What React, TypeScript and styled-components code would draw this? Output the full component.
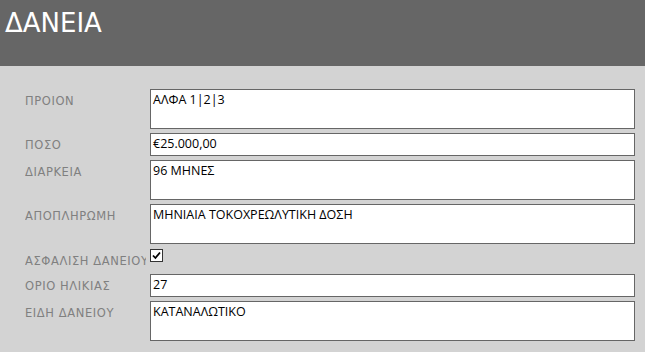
import { Fragment } from 'react'
import styled, { createGlobalStyle } from 'styled-components'

const GlobalStyle = createGlobalStyle`
  html, body {
    margin: 0;
    padding: 0;
    background: #d3d3d3;
  }
`

const Page = styled.div`
  width: 645px;
  height: 352px;
  background: #d3d3d3;
  overflow: hidden;
`

const Header = styled.header`
  height: 66px;
  background: #666666;
  box-sizing: border-box;
  padding: 8px 0 0 5px;
`

const Title = styled.h1`
  margin: 0;
  color: #ffffff;
  font-family: "DejaVu Sans", sans-serif;
  font-weight: normal;
  font-size: 26px;
  line-height: 30px;
`

const Form = styled.div`
  display: grid;
  grid-template-columns: 125px 485px;
  row-gap: 4px;
  padding: 23px 0 0 25px;
`

const Label = styled.div<{ $top?: number }>`
  width: 121px;
  color: #808080;
  font-family: "DejaVu Sans", sans-serif;
  font-size: 11.5px;
  letter-spacing: 0.6px;
  line-height: 14px;
  white-space: nowrap;
  overflow: hidden;
  padding-top: ${props => props.$top ?? 5}px;
`

const Field = styled.div<{ $tall?: boolean }>`
  box-sizing: border-box;
  height: ${props => (props.$tall ? 40 : 23)}px;
  background: #ffffff;
  border: 1px solid #666666;
  padding: 1px 2px;
  color: #000;
  font-family: "Open Sans", "Noto Sans", sans-serif;
  font-size: 12.5px;
  line-height: 17px;
`

const CheckCell = styled.div`
  height: 22px;
  padding-top: 1px;
  box-sizing: border-box;
`

const CheckBox = styled.div`
  width: 13px;
  height: 13px;
  box-sizing: border-box;
  border: 1px solid #333;
  background: #fff;
  display: flex;
  align-items: center;
  justify-content: center;
`

const rows = [
  { label: 'ΠΡΟΙΟΝ', value: 'ΑΛΦΑ 1|2|3', tall: true },
  { label: 'ΠΟΣΟ', value: '€25.000,00', tall: false },
  { label: 'ΔΙΑΡΚΕΙΑ', value: '96 ΜΗΝΕΣ', tall: true },
  { label: 'ΑΠΟΠΛΗΡΩΜΗ', value: 'ΜΗΝΙΑΙΑ ΤΟΚΟΧΡΕΩΛΥΤΙΚΗ ΔΟΣΗ', tall: true },
]

const rowsAfter = [
  { label: 'ΟΡΙΟ ΗΛΙΚΙΑΣ', value: '27', tall: false },
  { label: 'ΕΙΔΗ ΔΑΝΕΙΟΥ', value: 'ΚΑΤΑΝΑΛΩΤΙΚΟ', tall: true },
]

export default function App() {
  return (
    <>
      <GlobalStyle />
      <Page>
        <Header>
          <Title>ΔΑΝΕΙΑ</Title>
        </Header>
        <Form>
          {rows.map(r => (
            <Fragment key={r.label}>
              <Label>{r.label}</Label>
              <Field $tall={r.tall}>{r.value}</Field>
            </Fragment>
          ))}
          <Label $top={6}>ΑΣΦΑΛΙΣΗ ΔΑΝΕΙΟΥ</Label>
          <CheckCell>
            <CheckBox>
              <svg width="9" height="9" viewBox="0 0 9 9">
                <path d="M1 4.5 L3.4 7 L8 1.5" fill="none" stroke="#000" strokeWidth="1.8" />
              </svg>
            </CheckBox>
          </CheckCell>
          {rowsAfter.map(r => (
            <Fragment key={r.label}>
              <Label>{r.label}</Label>
              <Field $tall={r.tall}>{r.value}</Field>
            </Fragment>
          ))}
        </Form>
      </Page>
    </>
  )
}
